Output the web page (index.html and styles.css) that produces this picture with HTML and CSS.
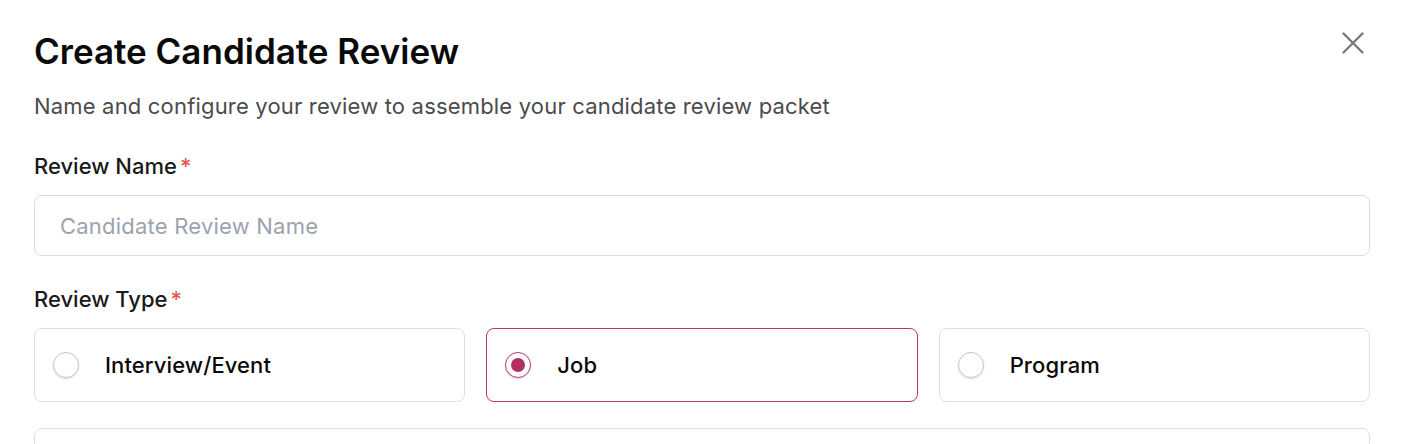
FILE: index.html
```html
<!DOCTYPE html>
<html>
<head>
<meta charset="utf-8">
<link rel="stylesheet" href="styles.css">
</head>
<body>
<div class="dialog">
  <div class="header">
    <h1 class="title">Create Candidate Review</h1>
    <button class="close" aria-label="Close">
      <svg width="22" height="22" viewBox="0 0 22 22"><path d="M1.5 1.5L20.5 20.5M20.5 1.5L1.5 20.5" stroke="#777" stroke-width="2.3" stroke-linecap="round"/></svg>
    </button>
  </div>
  <p class="subtitle">Name and configure your review to assemble your candidate review packet</p>
  <label class="label">Review Name<span class="req">*</span></label>
  <div class="input"><span class="placeholder">Candidate Review Name</span></div>
  <label class="label label-type">Review Type<span class="req">*</span></label>
  <div class="cards">
    <div class="card"><span class="radio"></span><span class="card-text">Interview/Event</span></div>
    <div class="card selected"><span class="radio on"></span><span class="card-text">Job</span></div>
    <div class="card"><span class="radio"></span><span class="card-text">Program</span></div>
  </div>
  <div class="next-box"></div>
</div>
</body>
</html>
```
FILE: styles.css
```css
* { box-sizing: border-box; }
html, body { margin: 0; padding: 0; background: #fff; overflow: hidden; }
body { font-family: Inter, "Noto Sans", sans-serif; color: #111; }
.dialog { padding: 31px 48px 0 34px; }
.header { display: flex; justify-content: space-between; align-items: flex-start; }
.title { margin: 0; font-size: 35px; line-height: 40px; font-weight: 560; color: #0a0a0a; }
.close { background: none; border: 0; padding: 0; margin: 1px 6px 0 0; width: 22px; height: 22px; cursor: pointer; }
.subtitle { margin: 21px 0 0; font-size: 22px; line-height: 28px; color: #4b4b4b; letter-spacing: 0.18px; }
.label { display: block; margin-top: 32px; font-size: 22px; line-height: 28px; font-weight: 500; color: #1a1a1a; }
.req { color: #e0574f; margin-left: 3px; }
.input { margin-top: 15px; height: 61px; border: 1px solid #dcdcdc; border-radius: 8px; padding: 0 25px; display: flex; align-items: center; }
.placeholder { font-size: 22px; color: #9ca3af; letter-spacing: 0.22px; }
.label-type { margin-top: 29px; }
.cards { margin-top: 15px; display: grid; grid-template-columns: repeat(3, 1fr); gap: 21px; }
.card { height: 74px; border: 1px solid #e0e0e0; border-radius: 8px; display: flex; align-items: center; padding-left: 18px; gap: 26px; }
.card.selected { border-color: #b5386a; }
.radio { width: 26px; height: 26px; border-radius: 50%; border: 1px solid #c4c4c4; box-shadow: 0 1px 2px rgba(0,0,0,0.15); display: flex; align-items: center; justify-content: center; flex: none; }
.radio.on { border-color: #b5386a; }
.radio.on::after { content: ""; width: 14px; height: 14px; border-radius: 50%; background: #b0305f; }
.card-text { font-size: 22px; font-weight: 500; color: #0a0a0a; letter-spacing: 0.1px; }
.next-box { margin-top: 26px; height: 60px; border: 1px solid #e0e0e0; border-radius: 8px; }
```
